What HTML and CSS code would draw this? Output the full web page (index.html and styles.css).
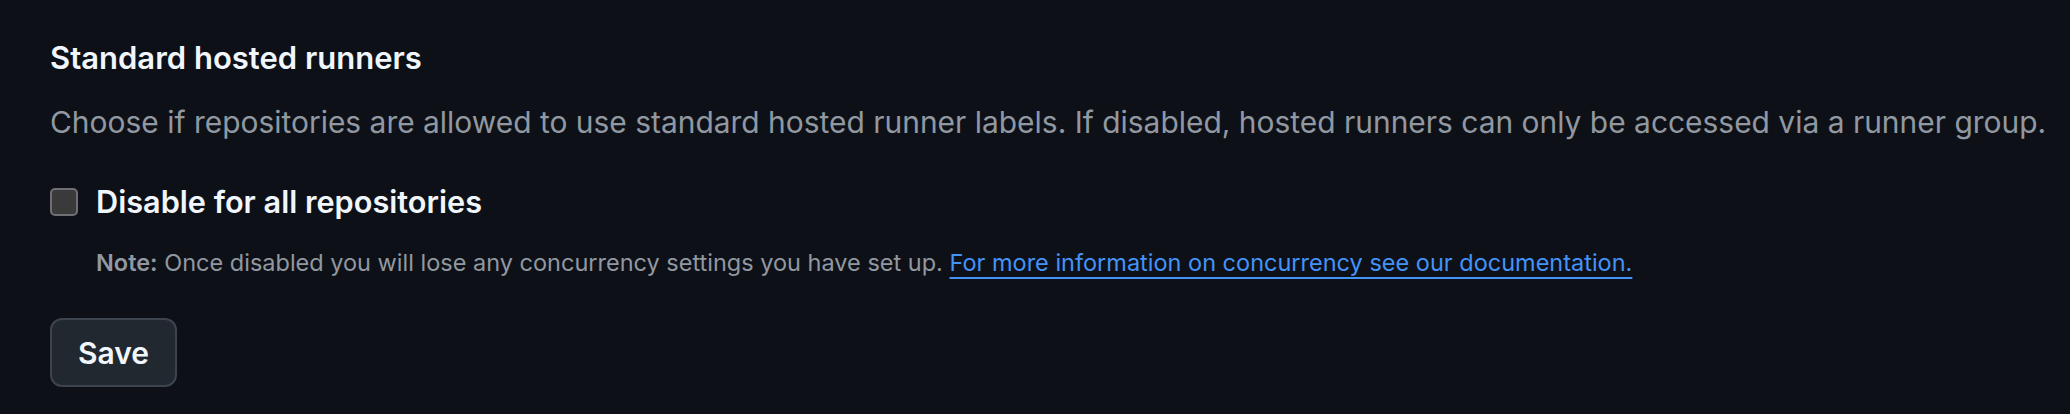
FILE: index.html
```html
<!DOCTYPE html>
<html lang="en">
<head>
<meta charset="utf-8">
<title>Standard hosted runners</title>
<link rel="stylesheet" href="styles.css">
</head>
<body>
<form class="settings">
  <h3 class="title">Standard hosted runners</h3>
  <p class="desc">Choose if repositories are allowed to use standard hosted runner labels. If disabled, hosted runners can only be accessed via a runner group.</p>
  <label class="check-row">
    <input type="checkbox" class="check">
    <span class="check-label">Disable for all repositories</span>
  </label>
  <p class="note"><strong>Note:</strong> Once disabled you will lose any concurrency settings you have set up. <a href="#" class="link">For more information on concurrency see our documentation.</a></p>
  <button type="button" class="btn">Save</button>
</form>
</body>
</html>
```
FILE: styles.css
```css
html, body {
  margin: 0;
  padding: 0;
  background: #0d1117;
}
body {
  font-family: Inter, "Noto Sans", "Liberation Sans", sans-serif;
  color: #f0f6fc;
}
.settings {
  display: flex;
  flex-direction: column;
  align-items: flex-start;
  padding: 38px 10px 0 50px;
}
.title {
  margin: 0;
  font-size: 31px;
  line-height: 40px;
  font-weight: 600;
}
.desc {
  margin: 24px 0 0;
  font-size: 29.95px;
  line-height: 40px;
  color: #9198a1;
  white-space: nowrap;
}
.check-row {
  margin-top: 40px;
  display: flex;
  align-items: center;
  gap: 18px;
}
.check {
  appearance: none;
  -webkit-appearance: none;
  margin: 0;
  width: 28px;
  height: 28px;
  box-sizing: border-box;
  border: 2px solid #6e7075;
  border-radius: 5px;
  background: #3a3a3b;
}
.check-label {
  font-size: 30.7px;
  line-height: 40px;
  font-weight: 600;
}
.note {
  margin: 25px 0 0 46px;
  font-size: 23.5px;
  line-height: 32px;
  color: #9198a1;
}
.note strong {
  font-weight: 600;
}
.link {
  color: #4493f8;
  text-decoration: underline;
  text-decoration-thickness: 2px;
  text-underline-offset: 6px;
}
.btn {
  margin-top: 39px;
  height: 69px;
  padding: 0 26px;
  box-sizing: border-box;
  font-family: inherit;
  font-size: 30px;
  font-weight: 600;
  color: #f0f6fc;
  background: #212830;
  border: 2px solid #3d444d;
  border-radius: 12px;
}
```
